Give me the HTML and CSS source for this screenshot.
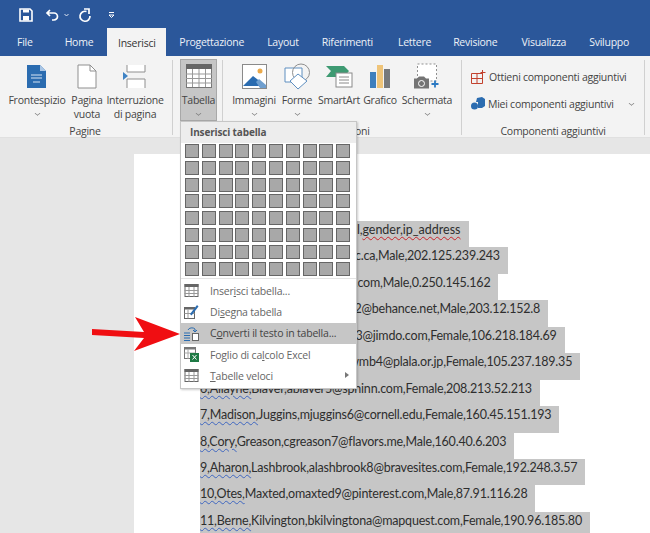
FILE: index.html
```html
<!DOCTYPE html>
<html lang="it">
<head>
<meta charset="utf-8">
<title>Word</title>
<link rel="stylesheet" href="styles.css">
</head>
<body>
<header class="titlebar">
  <svg class="qa" width="16" height="16" viewBox="0 0 16 16"><path d="M2 2h10l2 2v10H2z" fill="none" stroke="#fff" stroke-width="1.6"/><path d="M5 2.500h6v3H5zM5 9h6v4.500H5z" fill="#fff"/></svg>
  <svg class="qa undo" width="15" height="15" viewBox="0 0 15 15"><path d="M5 2 2 5l3 3M2.500 5H9a3.500 3.500 0 0 1 0 7H7" fill="none" stroke="#fff" stroke-width="1.700"/></svg>
  <svg class="chev light" width="5" height="4" viewBox="0 0 5 4"><path d="M.5 1l2 2 2-2" fill="none" stroke="#dfe6f2"/></svg>
  <svg class="qa redo" width="14" height="15" viewBox="0 0 14 15"><path d="M8.500 3.500A5 5 0 1 0 12 8M6 1h5v5" fill="none" stroke="#fff" stroke-width="1.700"/></svg>
  <svg class="qa more" width="6" height="6" viewBox="0 0 6 6"><path d="M0 .5h5M0 3h5l-2.500 2.500z" fill="none" stroke="#fff"/></svg>
</header>
<nav class="tabs">
  <span class="tab t-file">File</span>
  <span class="tab t-home">Home</span>
  <span class="tab active">Inserisci</span>
  <span class="tab t-prog">Progettazione</span>
  <span class="tab t-lay">Layout</span>
  <span class="tab t-rif">Riferimenti</span>
  <span class="tab t-let">Lettere</span>
  <span class="tab t-rev">Revisione</span>
  <span class="tab t-vis">Visualizza</span>
  <span class="tab t-svi">Sviluppo</span>
</nav>
<section class="ribbon">
  <div class="group g-pages">
    <div class="buttons">
      <div class="btn"><svg class="ico" width="20" height="25" viewBox="0 0 20 25"><path d="M0 1h13l6 6v17H0z" fill="#2b6cb0"/><path d="M13 1l6 6h-6z" fill="#a9c6e6"/><path d="M4 11h11M4 14h11M6 18h7" stroke="#d5e4f4" stroke-width="1.200"/></svg><span class="lbl">Frontespizio</span><i class="chev"></i></div>
      <div class="btn"><svg class="ico" width="20" height="25" viewBox="0 0 20 25"><path d="M1 1h12l6 6v17H1z" fill="#fff" stroke="#8f8f8f"/><path d="M13 1v6h6" fill="none" stroke="#8f8f8f"/></svg><span class="lbl">Pagina<br>vuota</span></div>
      <div class="btn"><svg class="ico" width="24" height="25" viewBox="0 0 24 25"><path d="M4 1v7h18V1M4 24v-9h18v9" fill="#fff" stroke="#8f8f8f"/><path d="M0 8l5 4-5 4z" fill="#3f83c4"/></svg><span class="lbl">Interruzione<br>di pagina</span></div>
    </div>
    <div class="gname">Pagine</div>
  </div>
  <div class="group g-table">
    <div class="buttons">
      <div class="btn table-btn"><svg class="ico" width="26" height="24" viewBox="0 0 26 24"><rect x=".5" y=".5" width="25" height="23" fill="#fff" stroke="#777"/><rect width="26" height="5" fill="#666"/><path d="M0 10h26M0 14.500h26M0 19h26M6.500 5v18M13 5v18M19.500 5v18" stroke="#999" fill="none"/></svg><span class="lbl">Tabella</span><i class="chev"></i></div>
    </div>
  </div>
  <div class="group g-illus">
    <div class="buttons">
      <div class="btn"><svg class="ico" width="25" height="25" viewBox="0 0 25 25"><rect x=".5" y=".5" width="24" height="24" fill="#fff" stroke="#8a8a8a"/><circle cx="18" cy="7" r="2.500" fill="#eba94a"/><path d="M1 22l10-10 13 10z" fill="#2b6cb0"/><path d="M14 18l3-3 7 6v3h-6z" fill="#6f9fcf"/></svg><span class="lbl">Immagini</span><i class="chev"></i></div>
      <div class="btn"><svg class="ico" width="27" height="27" viewBox="0 0 27 27"><path d="M1 5h17v14H1z" fill="#fff" stroke="#5f8fc0"/><circle cx="17" cy="9.500" r="8.500" fill="none" stroke="#8f8f8f"/><path d="M14 11l9 7-9 8-8-8z" fill="#fff" stroke="#5f8fc0"/></svg><span class="lbl">Forme</span><i class="chev"></i></div>
      <div class="btn"><svg class="ico" width="27" height="25" viewBox="0 0 27 25"><path d="M0 2h18l5 5-5 6H0l5-6z" fill="#3e9a72"/><rect x="10" y="9" width="16" height="14" fill="#fff" stroke="#8a8a8a"/><path d="M13 13h10M13 16h10M13 19h10" stroke="#8a8a8a"/></svg><span class="lbl">SmartArt</span></div>
      <div class="btn"><svg class="ico" width="21" height="25" viewBox="0 0 21 25"><rect y="8" width="6" height="16" fill="#3f7fbd"/><rect x="7" y="1" width="6" height="23" fill="#efc479"/><rect x="14" y="5" width="6" height="19" fill="#77797c"/></svg><span class="lbl">Grafico</span></div>
      <div class="btn"><svg class="ico shot" width="26" height="26" viewBox="0 0 26 26"><rect x="3.500" y=".5" width="19" height="17" fill="#fff" stroke="#8f8f8f" stroke-dasharray="2 2"/><path d="M0 15h3l2-2h5l2 2h3v10H0z" fill="#747474"/><circle cx="7.500" cy="20" r="3" fill="none" stroke="#fff"/><path d="M21 17v7M17.500 20.500h7" stroke="#2b79c2" stroke-width="1.800"/></svg><span class="lbl">Schermata</span><i class="chev"></i></div>
    </div>
    <div class="gname">Illustrazioni</div>
  </div>
  <div class="group g-addins">
    <div class="rows">
      <div class="row"><svg width="15" height="14" viewBox="0 0 15 14"><path d="M.5 3.500h11v10H.5zM6 3.500v10M.5 8.500h11" fill="none" stroke="#c2412d"/><path d="M11.500 0v5M9.500 2.500h5" stroke="#c2412d"/></svg><span>Ottieni componenti aggiuntivi</span></div>
      <div class="row"><svg width="14" height="13" viewBox="0 0 14 13"><path d="M6 1l5-1 3 2v7l-3 2H7V5H5z" fill="#2b6cb0"/><circle cx="3.500" cy="9" r="3.500" fill="#2b6cb0"/></svg><span>Miei componenti aggiuntivi</span><i class="chev add-chev"></i></div>
    </div>
    <div class="gname">Componenti aggiuntivi</div>
  </div>
</section>
<main class="workspace">
  <article class="page">
    <p><span class="sel">id,first_name,last_name,e_mail,<span class="red">gender,ip_address</span></span></p>
    <p><span class="sel"><span class="blue">1,Mary,</span>Roth,mroth0@topsy.uc.ca,Male,202.125.239.243</span></p>
    <p><span class="sel"><span class="blue">2,Nerta,</span>Ablet,nablet1@skype.com,Male,0.250.145.162</span></p>
    <p><span class="sel"><span class="blue">3,Gabey,</span>Coulmans,gcoulmani2@behance.net,Male,203.12.152.8</span></p>
    <p><span class="sel"><span class="blue">4,Arielle,</span>Kinnearly,akinnearlyi3@jimdo.com,Female,106.218.184.69</span></p>
    <p><span class="sel"><span class="blue">5,Brena,</span>Mathewson,bmathewmb4@plala.or.jp,Female,105.237.189.35</span></p>
    <p><span class="sel"><span class="blue">6,Allayne,</span>Blaver,ablaver5@sphinn.com,Female,208.213.52.213</span></p>
    <p><span class="sel"><span class="blue">7,Madison,</span>Juggins,mjuggins6@cornell.edu,Female,160.45.151.193</span></p>
    <p><span class="sel"><span class="blue">8,Cory,</span>Greason,cgreason7@flavors.me,Male,160.40.6.203</span></p>
    <p><span class="sel"><span class="blue">9,Aharon,</span>Lashbrook,alashbrook8@bravesites.com,Female,192.248.3.57</span></p>
    <p><span class="sel"><span class="blue">10,Otes,</span>Maxted,omaxted9@pinterest.com,Male,87.91.116.28</span></p>
    <p><span class="sel"><span class="blue">11,Berne,</span>Kilvington,bkilvingtona@mapquest.com,Female,190.96.185.80</span></p>
  </article>
</main>
<aside class="menu">
  <div class="menu-head">Inserisci tabella</div>
  <div class="grid" id="grid"></div>
  <ul class="items">
    <li><svg width="14" height="13" viewBox="0 0 14 13"><rect x=".5" y=".5" width="13" height="12" fill="#fff" stroke="#666"/><rect width="14" height="3" fill="#666"/><path d="M0 6.500h14M0 9.500h14M4.500 3v10M9.500 3v10" stroke="#999"/></svg><span>Inser<u>i</u>sci tabella...</span></li>
    <li><svg width="15" height="15" viewBox="0 0 15 15"><rect x=".5" y="3.500" width="10" height="11" fill="#fff" stroke="#666"/><rect y="3" width="11" height="2.500" fill="#666"/><path d="M4 5.500v9M.5 9.500h10" stroke="#999"/><path d="M6 10l7-9 1.500 1.500-7 9z" fill="#2b6cb0"/></svg><span>Di<u>s</u>egna tabella</span></li>
    <li class="hot"><svg width="15" height="15" viewBox="0 0 15 15"><path d="M0 7h6M0 9.500h6M0 12h6M0 14.500h6" stroke="#2b6cb0"/><rect x="8.500" y="7.500" width="6" height="7" fill="#fff" stroke="#666"/><path d="M4 4a4 3 0 0 1 7-1l0 3M9 4l2 2 2-2" fill="none" stroke="#2b6cb0"/></svg><span>C<u>o</u>nverti il testo in tabella...</span></li>
    <li><svg width="15" height="15" viewBox="0 0 15 15"><rect x=".5" y=".5" width="11" height="11" fill="#fff" stroke="#777"/><rect width="12" height="2.500" fill="#777"/><path d="M4 2v10M.5 6h11" stroke="#aaa"/><rect x="6" y="6" width="9" height="9" fill="#1f7a45"/><path d="M8.500 8l4 4.500M12.500 8l-4 4.500" stroke="#fff"/></svg><span>Foglio di ca<u>l</u>colo Excel</span></li>
    <li><svg width="14" height="13" viewBox="0 0 14 13"><rect x=".5" y=".5" width="13" height="12" fill="#fff" stroke="#666"/><rect width="14" height="3" fill="#666"/><path d="M0 6.500h14M0 9.500h14M4.500 3v10M9.500 3v10" stroke="#999"/></svg><span><u>T</u>abelle veloci</span><b class="sub"></b></li>
  </ul>
</aside>
<svg class="arrow" width="90" height="36" viewBox="0 0 90 36"><path d="M0 12 52 15 43 0 88 17 42 34 52 21 0 18z" fill="#f00e12"/></svg>
<script src="grid.js"></script>
</body>
</html>
```
FILE: grid.js
```js
var g = document.getElementById('grid');
for (var i = 0; i < 80; i++) {
  var c = document.createElement('span');
  c.className = 'cell';
  g.appendChild(c);
}
```
FILE: styles.css
```css
* { box-sizing: border-box; }
html, body { margin: 0; padding: 0; }
body {
  position: relative;
  width: 650px;
  height: 533px;
  overflow: hidden;
  display: flex;
  flex-direction: column;
  background: #e6e6e6;
  font-family: "Open Sans", "Noto Sans", sans-serif;
  color: #444;
}
.titlebar {
  height: 28px;
  flex: none;
  background: #2b579a;
  display: flex;
  align-items: center;
  padding: 2px 0 0 18px;
}
.qa { display: block; flex: none; }
.undo { margin-left: 11px; }
.chev.light { margin-left: 4px; }
.redo { margin-left: 9px; }
.more { margin-left: 17px; }
.tabs {
  height: 28px;
  flex: none;
  background: #2b579a;
  display: flex;
  align-items: center;
  font-size: 10.5px;
  letter-spacing: -.25px;
  color: #edf1f7;
}
.tab { display: block; white-space: nowrap; margin-left: 24px; line-height: 30px; }
.tab:first-child { margin-left: 17px; }
.t-home { margin-left: 32px; }
.tab.active {
  background: #f3f3f3;
  color: #333;
  width: 59px;
  margin-left: 14px;
  text-align: center;
  height: 28px;
}
.tab.t-prog { margin-left: 13px; }
.tab.t-lay { margin-left: 23px; }
.tab.t-rif { margin-left: 23px; }
.tab.t-let { margin-left: 25px; }
.tab.t-rev { margin-left: 22px; }
.tab.t-svi { margin-left: 23px; }
.ribbon {
  height: 82px;
  flex: none;
  background: #f3f3f3;
  border-bottom: 1px solid #e0e0e0;
  display: flex;
  font-size: 10.5px;
  letter-spacing: -.25px;
  color: #444;
}
.group { position: relative; flex: none; border-right: 1px solid #d0d0d0; margin: 4px 0 2px; }
.buttons { display: grid; height: 64px; }
.btn { display: flex; flex-direction: column; align-items: center; text-align: center; line-height: 14px; white-space: nowrap; height: 64px; }
.ico { display: block; flex: none; margin-top: 3px; height: 27px; margin-bottom: 3px; }
.lbl { display: block; }
.chev { display: block; flex: none; }
i.chev {
  width: 5px;
  height: 5px;
  margin-top: 4px;
  border-right: 1px solid #777;
  border-bottom: 1px solid #777;
  transform: scale(.8, .6) rotate(45deg);
}
.gname { text-align: center; line-height: 14px; color: #444; white-space: nowrap; }
.g-pages { width: 173px; padding-left: 8px; }
.g-pages .buttons { grid-template-columns: 58px 42px 54px; }
.g-pages .gname { width: 154px; }
.g-table { width: 50px; padding-left: 7px; }
.g-table .buttons { grid-template-columns: 37px; }
.table-btn { background: #c6c6c6; border: 1px solid #a8a8a8; height: 62px; margin-top: -1px; }
.table-btn .ico { height: 24px; margin-bottom: 5px; margin-top: 4px; }
.g-illus { width: 239px; padding-left: 8px; }
.g-illus .buttons { grid-template-columns: 46px 40px 44px 38px 56px; }
.g-illus .gname { width: 224px; }
.g-addins { width: 183px; padding-left: 9px; }
.rows { height: 64px; padding-top: 6px; }
.row { display: flex; align-items: center; height: 21px; margin-bottom: 6px; white-space: nowrap; }
.row svg { flex: none; margin-right: 3px; }
.row i.chev { margin-top: 0; }
.add-chev { margin-left: 15px; }
.g-addins .gname { margin-left: -9px; }
.workspace { flex: 1; min-height: 0; padding: 16px 0 0 134px; }
.page {
  background: #fff;
  height: 400px;
  padding: 67px 0 0 66px;
  font-family: "Lato", "Liberation Sans", sans-serif;
  font-size: 12.5px;
  letter-spacing: -.2px;
  color: #2e2e2e;
}
.page p { margin: 0; height: 26.45px; white-space: nowrap; }
.sel { display: inline-block; background: #c6c6c6; height: 26.45px; line-height: 18px; padding-right: 8px; }
.red { text-decoration: underline wavy #c8262c 1px; text-underline-offset: 2px; letter-spacing: 0; }
.blue { text-decoration: underline wavy #3f66c0 1px; text-underline-offset: 2px; }
.menu {
  position: absolute;
  left: 180px;
  top: 121px;
  width: 177px;
  height: 268px;
  background: #fff;
  border: 1px solid #c6c6c6;
  box-shadow: 1px 1px 2px rgba(0, 0, 0, .2);
  font-size: 10.5px;
  letter-spacing: -.2px;
}
.menu-head { height: 21px; background: #ededed; color: #555; font-weight: 700; font-size: 10px; letter-spacing: -.15px; line-height: 20px; padding-left: 9px; }
.grid { display: grid; grid-template-columns: repeat(10, 14px); grid-auto-rows: 14px; gap: 2.8px; padding: 1px 0 0 4px; height: 135px; }
.cell { background: #a8a8a8; border: 1px solid #666; display: block; }
.items { list-style: none; margin: 0; padding: 1px 0 0; border-top: 1px solid #e4e4e4; }
.items li { position: relative; height: 21.3px; display: flex; align-items: center; padding-left: 3px; color: #666; white-space: nowrap; }
.items li svg { flex: none; width: 15px; margin-right: 11px; }
.items li.hot { background: #c6c6c6; color: #444; }
.items u { text-underline-offset: 1px; }
.sub { position: absolute; right: 7px; top: 7px; border-left: 4px solid #777; border-top: 3.500px solid transparent; border-bottom: 3.500px solid transparent; }
.arrow { position: absolute; left: 92px; top: 317px; }
```
